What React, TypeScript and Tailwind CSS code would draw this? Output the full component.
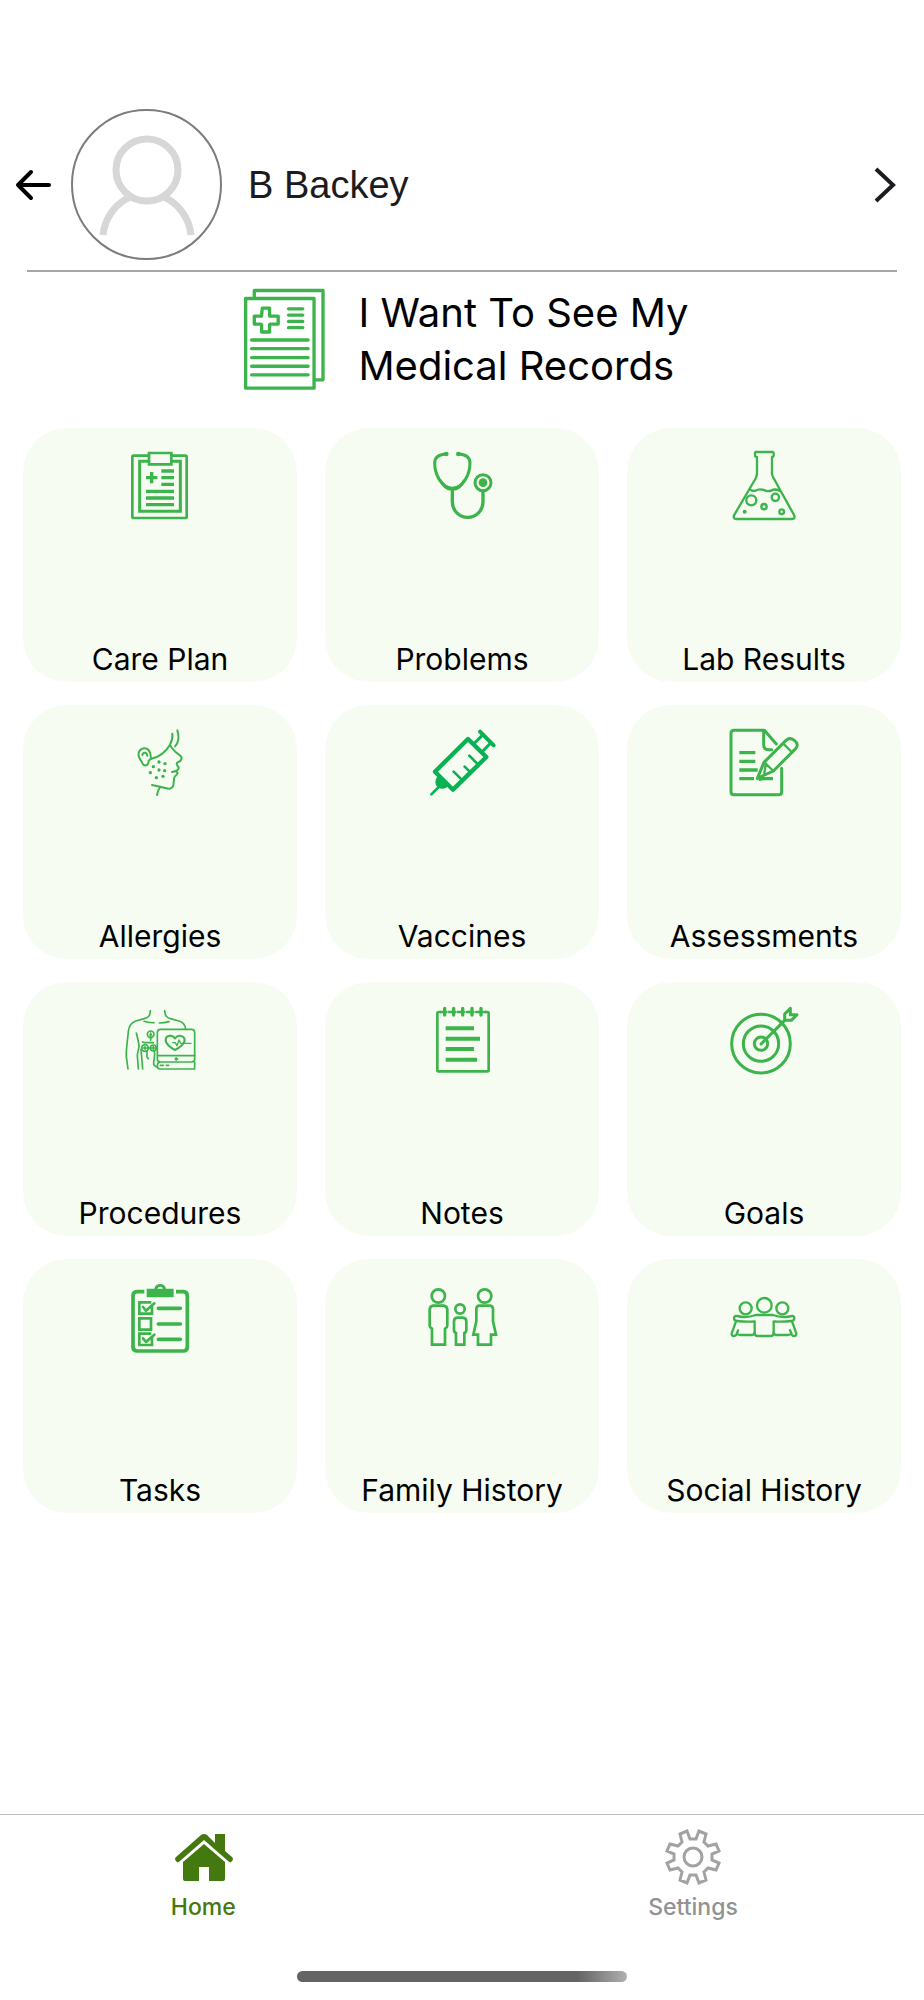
import type { ReactNode } from 'react';

type IconProps = {
  viewBox: string;
  stroke?: number;
  className?: string;
  children: ReactNode;
};

const Icon = ({ viewBox, stroke = 8, className = 'h-20 w-20 text-[#3cb34b]', children }: IconProps) => (
  <svg
    className={className}
    viewBox={viewBox}
    fill="none"
    stroke="currentColor"
    strokeWidth={stroke}
    strokeLinecap="round"
    strokeLinejoin="round"
    aria-hidden="true"
  >
    {children}
  </svg>
);

const RecordsIcon = () => (
  <Icon viewBox="70 52 250 312" stroke={10} className="h-[104px] w-[83px] shrink-0 text-[#3cb34b]">
    <path d="M104 84V62H311V331H288" />
    <path d="M78 86H284V356H78Z" />
    <path d="M128 115H150V137Q150 139 153 139H176V163H153Q150 163 150 166V187H126V166Q126 163 123 163H104V139H123Q126 139 126 137Z" />
    <path d="M207 117H250M207 136H250M207 155H250M207 174H250" />
    <path d="M96 211H266M96 237H266M96 264H266M96 290H266M96 316H266" />
  </Icon>
);

const CarePlanIcon = () => (
  <Icon viewBox="300 78 240 240">
    <path d="M386 107H341Q337 107 337 111V290Q337 294 341 294H496Q500 294 500 290V111Q500 107 496 107H455" />
    <path d="M386 124H359V274H481V124H455" strokeWidth="9" strokeLinejoin="miter" />
    <path d="M387 99H454V133H387Z" strokeLinejoin="miter" />
    <path
      d="M395 156V190M378 173H412M424 153H462M424 173H462M424 193H462M378 214H462M378 234H462M378 254H462"
      strokeWidth="10"
      strokeLinecap="butt"
    />
  </Icon>
);

const StethoscopeIcon = () => (
  <Icon viewBox="6 48 240 240" stroke={9}>
    <path d="M78 72C60 73 44 78 44 99C44 133 65 175 97 175C129 175 150 133 150 99C150 80 135 73 116 72" />
    <path d="M62 150C72 168 84 174 97 174C110 174 122 168 132 150C126 172 113 180 97 180C81 180 68 172 62 150Z" fill="currentColor" strokeWidth="5" />
    <circle cx="79" cy="72" r="4" fill="currentColor" strokeWidth="6" />
    <circle cx="115" cy="72" r="4" fill="currentColor" strokeWidth="6" />
    <path d="M97 180V216A46 46 0 0 0 189 216V186" strokeWidth="10" />
    <circle cx="189" cy="158" r="24" />
    <circle cx="189" cy="158" r="13" fill="currentColor" stroke="none" />
  </Icon>
);

const FlaskIcon = () => (
  <Icon viewBox="914 48 240 240" stroke={7}>
    <path d="M1009 66H1060Q1063 66 1063 70V76Q1063 81 1058 81V126Q1057 134 1061 141L1124 255Q1129 267 1118 267H951Q941 267 944 256L1008 147Q1012 139 1013 130V81Q1007 81 1007 76V70Q1007 66 1009 66Z" />
    <path d="M993 179Q1001 184 1008 182Q1020 175 1034 180Q1044 186 1055 182Q1066 175 1080 182" />
    <circle cx="996" cy="211" r="15" />
    <circle cx="1068" cy="202" r="11" />
    <circle cx="1034" cy="230" r="8" />
    <circle cx="1087" cy="245" r="7" />
    <circle cx="976" cy="245" r="6" fill="currentColor" stroke="none" />
  </Icon>
);

const AllergiesIcon = () => (
  <Icon viewBox="30 39 240 240" stroke={6}>
    <path d="M187 71C189 86 184 97 180 104C166 129 146 141 122 147" />
    <path d="M202 61C208 77 207 97 195 109" />
    <path d="M181 106C189 123 203 130 212 138C218 144 213 154 205 156C196 159 202 167 206 172C207 181 200 183 186 186M194 184C202 184 206 189 199 195C192 200 191 204 192 209L190 226Q187 237 176 236L126 225" />
    <path d="M150 232Q143 240 141 255" />
    <path d="M122 147C124 126 115 114 102 115C88 117 83 130 87 141C90 150 95 153 97 159C101 170 112 168 115 158C116 153 114 153 120 149M97 135C99 126 110 125 112 137" />
    <g fill="currentColor" stroke="none">
      <circle cx="147" cy="156" r="5" />
      <circle cx="165" cy="161" r="5" />
      <circle cx="130" cy="170" r="5" />
      <circle cx="147" cy="180" r="5" />
      <circle cx="164" cy="182" r="5" />
      <circle cx="121" cy="188" r="5" />
      <circle cx="139" cy="203" r="5" />
      <circle cx="159" cy="199" r="5" />
    </g>
  </Icon>
);

const SyringeIcon = () => (
  <Icon viewBox="36 39 240 240" className="h-20 w-20 text-[#08b152]">
    <path d="M174 87L229 141L129 239L75 185Z" strokeWidth="13" />
    <path d="M210 65L251 106" strokeWidth="12" />
    <path d="M216 77L194 99M240 101L218 124" strokeWidth="9" />
    <path d="M178 137L201 160M164 170L179 185M131 185L152 206" />
    <path d="M64 253L88 229" />
    <path d="M84 203A16 16 0 1 0 110 228Z" fill="currentColor" strokeWidth="6" />
  </Icon>
);

const AssessmentsIcon = () => (
  <Icon viewBox="944 39 240 240" stroke={9}>
    <path d="M1101 102L1065 61H974Q965 61 965 70V245Q965 254 974 254H1108Q1117 254 1117 245V175" />
    <path d="M1063 62V106Q1064 119 1077 119H1087" />
    <path
      d="M990 128H1038M990 154H1038M990 180H1045M990 206H1034M1048 209L1060 206H1091"
      strokeWidth="10"
      strokeLinecap="butt"
    />
    <path d="M1044 205L1064 157L1130 91Q1142 81 1155 91Q1170 103 1159 116L1092 183Z" />
    <path d="M1066 158L1092 183M1122 101L1147 126M1069 164L1065 189" strokeWidth="7" />
  </Icon>
);

const ProceduresIcon = () => (
  <Icon viewBox="30 30 240 240" stroke={5}>
    <path d="M121 62C121 80 113 83 103 86L77 93C61 99 56 111 55 124C54 142 48 174 49 199L54 237" />
    <path d="M164 62C165 80 172 83 181 86L207 93C220 97 226 106 227 118" />
    <path d="M102 94Q116 99 132 98M148 99Q162 99 177 95" />
    <path d="M79 129C82 141 84 149 86 160C90 175 82 183 82 197L85 237M93 178L98 237" />
    <rect x="142" y="118" width="112" height="98" rx="9" />
    <path d="M143 197H254M149 216Q142 218 142 227T149 237H254V216" />
    <path d="M151 226H160M169 226H176" />
    <circle cx="199" cy="207" r="4" fill="currentColor" strokeWidth="3" />
    <path d="M195 180C182 174 166 161 167 148C169 135 187 133 195 145C204 133 222 136 224 149C225 161 208 174 195 180Z" strokeWidth="6" />
    <path d="M188 158H196L201 167L207 150L212 160H243" strokeWidth="4" />
    <circle cx="122" cy="133" r="10" />
    <circle cx="105" cy="174" r="10" />
    <circle cx="130" cy="174" r="9" />
    <path d="M122 129V151M97 156L104 158H130M105 170V178M99 174H137M130 170V178M111 183V201L115 206M133 184C137 197 130 210 131 223Q134 229 142 232" />
    <path d="M118 136L122 130L126 136" strokeWidth="3" />
  </Icon>
);

const NotesIcon = () => (
  <Icon viewBox="36 30 240 240">
    <path d="M92 66H86Q82 66 82 70V240Q82 244 86 244H232Q236 244 236 240V70Q236 66 232 66H226" />
    <path d="M92 66H96M116 66H123M143 66H150M171 66H178M199 66H205M222 66H228" />
    <path d="M104 55V75M131 55V75M158 55V75M186 55V75M213 55V75" strokeWidth="10" />
    <path d="M98 66H108M125 66H135M152 66H162M180 66H190M207 66H217" />
    <path d="M107 115H192M107 146H210M107 177H192M107 209H201" strokeWidth="12" strokeLinecap="butt" />
  </Icon>
);

const GoalsIcon = () => (
  <Icon viewBox="944 30 240 240" stroke={9}>
    <circle cx="1055" cy="161" r="88" />
    <circle cx="1055" cy="161" r="53" />
    <circle cx="1055" cy="161" r="20" />
    <path d="M1055 162L1126 91" />
    <path d="M1126 91V72L1143 55V74H1163L1146 91Z" />
  </Icon>
);

const TasksIcon = () => (
  <Icon viewBox="30 21 240 240" stroke={11}>
    <path
      d="M103 65H82Q69 65 69 78V231Q69 243 82 243H220Q232 243 232 231V78Q232 65 220 65H198"
      strokeLinecap="butt"
    />
    <path d="M110 56H133A18 18 0 0 1 168 56H191V82H110ZM142 56H159A9 9 0 0 0 142 56Z" fill="currentColor" fillRule="evenodd" stroke="none" />
    <g strokeWidth="8" strokeLinejoin="miter" strokeLinecap="butt">
      <path d="M126 108V131H88V97H124" />
      <path d="M88 145H123V179H88Z" />
      <path d="M126 201V225H88V191H124" />
    </g>
    <path d="M99 111L108 122L133 100M99 205L108 216L133 194" strokeWidth="8" />
    <path d="M145 115H211M145 162H211M145 208H211" />
  </Icon>
);

const FamilyIcon = () => (
  <Icon viewBox="36 21 240 240">
    <circle cx="85" cy="78" r="20" />
    <path d="M69 107H101Q112 109 112 120V167Q112 172 105 176V224H66V176Q59 172 59 167V120Q59 109 69 107Z" strokeLinejoin="miter" />
    <circle cx="150" cy="117" r="14" />
    <path d="M142 143H158Q169 144 169 154V180Q169 187 163 189V224H138V189Q132 187 132 180V154Q132 144 142 143Z" strokeLinejoin="miter" />
    <circle cx="224" cy="78" r="20" />
    <path d="M207 107H240Q249 108 249 118V154L258 194H243V224H204V194H190L199 154V118Q199 108 207 107Z" strokeLinejoin="miter" />
  </Icon>
);

const SocialIcon = () => (
  <Icon viewBox="944 21 240 240" stroke={7}>
    <circle cx="1009" cy="115" r="18" />
    <circle cx="1065" cy="106" r="22" />
    <circle cx="1119" cy="115" r="18" />
    <path d="M1039 135H1091Q1120 145 1148 138Q1154 137 1155 145Q1154 152 1146 153Q1120 156 1093 154V191Q1092 198 1084 198H1045Q1037 198 1036 191V154Q1010 156 983 153Q974 152 974 145Q975 137 983 138Q1011 145 1039 135Z" />
    <path d="M980 154L967 190Q966 199 975 198Q981 197 983 190L986 181M983 191Q986 195 993 195H1026Q1035 195 1036 188" />
    <path d="M1148 154L1161 190Q1162 199 1153 198Q1147 197 1146 190L1142 181M1145 191Q1142 195 1135 195H1102Q1094 195 1093 188" />
  </Icon>
);

const records = [
  { label: 'Care Plan', icon: CarePlanIcon },
  { label: 'Problems', icon: StethoscopeIcon },
  { label: 'Lab Results', icon: FlaskIcon },
  { label: 'Allergies', icon: AllergiesIcon },
  { label: 'Vaccines', icon: SyringeIcon },
  { label: 'Assessments', icon: AssessmentsIcon },
  { label: 'Procedures', icon: ProceduresIcon },
  { label: 'Notes', icon: NotesIcon },
  { label: 'Goals', icon: GoalsIcon },
  { label: 'Tasks', icon: TasksIcon },
  { label: 'Family History', icon: FamilyIcon },
  { label: 'Social History', icon: SocialIcon },
];

const Header = () => (
  <header className="px-[27px] pt-[109px] font-['Liberation_Sans',Arial,sans-serif]">
    <div className="-ml-3 flex items-center">
      <button type="button" aria-label="Back" className="shrink-0">
        <Icon viewBox="0 0 38 38" stroke={4} className="h-[38px] w-[38px] text-black">
          <path d="M34 19H3M16 6L3 19L16 32" />
        </Icon>
      </button>
      <div className="ml-[18px] flex h-[151px] w-[151px] shrink-0 items-center justify-center rounded-full border-2 border-[#7c7c7c]">
        <Icon viewBox="0 0 110 110" stroke={7} className="h-[110px] w-[110px] text-[#d7d7d7]">
          <circle cx="55" cy="40" r="31" />
          <path d="M11 105A45 46 0 0 1 41 66M69 66A45 46 0 0 1 99 105" strokeLinecap="butt" />
        </Icon>
      </div>
      <h2 className="ml-[26px] grow text-[38px] leading-[48px] text-[#1c1b20]">B Backey</h2>
      <button type="button" aria-label="Open profile" className="shrink-0">
        <Icon viewBox="0 0 24 38" stroke={4} className="h-[38px] w-6 text-[#1c1b20]">
          <path d="M3 3L20 19L3 35" strokeLinecap="butt" strokeLinejoin="miter" />
        </Icon>
      </button>
    </div>
    <hr className="mt-[10px] border-t-2 border-[#a6a6a6]" />
  </header>
);

const TabBar = () => (
  <footer className="mt-auto border-t border-[#bdbdbd] pb-[18px]">
    <nav className="flex justify-between pt-3 text-[23px] leading-7 font-medium">
      <a href="#home" className="flex w-[44%] flex-col items-center gap-[6px] text-[#44790f]">
        <svg className="h-[60px] w-[60px]" viewBox="0 0 60 60" fill="currentColor" aria-hidden="true">
          <path d="M3 34Q1 32 3 30L28 8Q31 6 34 8L42 16V7H52V24L59 30Q61 32 59 34L58 35Q57 36 55 34L31 13L7 34Q5 36 4 35Z" />
          <path d="M31 17L52 35V52Q52 54 50 54H36V40H26V54H12Q10 54 10 52V35Z" />
        </svg>
        Home
      </a>
      <a href="#settings" className="flex w-1/2 flex-col items-center gap-[6px] text-[#929292]">
        <Icon viewBox="0 0 60 60" stroke={3} className="h-[60px] w-[60px] text-[#a2a2a2]">
          <circle cx="30" cy="30" r="9" />
          <path
            d="M27 12H33L36 4L43 7L41 15L45 19L53 17L56 24L49 27V33L56 36L53 43L45 41L41 45L43 53L36 56L33 48H27L24 56L17 53L19 45L15 41L7 43L4 36L11 33V27L4 24L7 17L15 19L19 15L17 7L24 4Z"
            strokeLinejoin="miter"
          />
        </Icon>
        Settings
      </a>
    </nav>
    <div className="mx-auto mt-[50px] h-[11px] w-[330px] rounded-full bg-linear-to-r from-[#646464] from-85% to-[#b0b0b0]"></div>
  </footer>
);

const App = () => {
  return (
    <div className="flex min-h-screen flex-col bg-white font-['Inter',sans-serif] text-black">
      <Header />

      <main className="px-[23px] pt-[14px]">
        <div className="flex items-center justify-center gap-8 pl-2">
          <RecordsIcon />
          <h1 className="text-[40px] leading-[53px]">
            I Want To See My
            <br />
            Medical Records
          </h1>
        </div>

        <div className="mt-9 grid grid-cols-3 gap-x-7 gap-y-[23px]">
          {records.map((item) => (
            <button
              key={item.label}
              type="button"
              className="flex h-[254px] flex-col items-center justify-between rounded-[44px] bg-[#f6fcf2] pt-[18px] pb-[3px]"
            >
              <item.icon />
              <span className="text-[30px] leading-10">{item.label}</span>
            </button>
          ))}
        </div>
      </main>

      <TabBar />
    </div>
  );
};

export default App;
